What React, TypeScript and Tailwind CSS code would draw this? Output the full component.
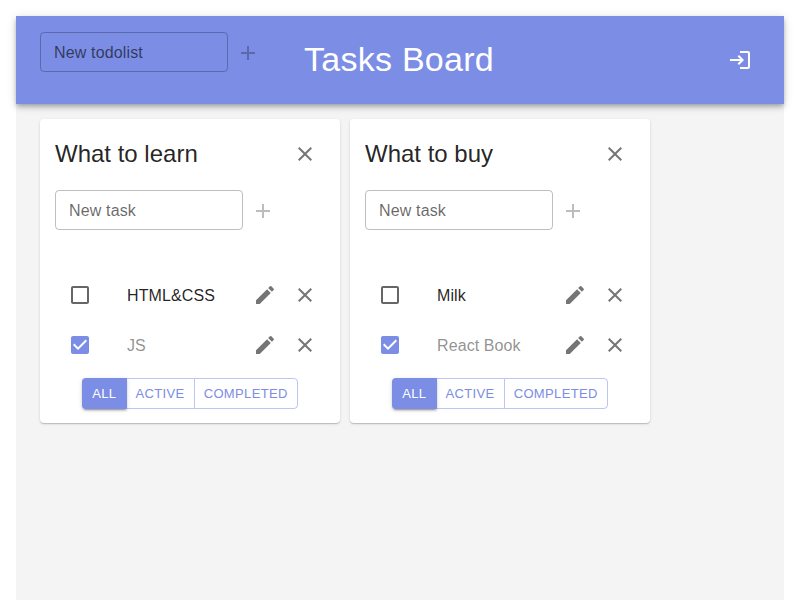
import React from 'react';

function Icon({ d, className = '' }: { d: string; className?: string }) {
  return (
    <svg viewBox="0 0 24 24" className={`block size-6 shrink-0 fill-current ${className}`} aria-hidden="true">
      <path d={d} />
    </svg>
  );
}

const ADD = 'M19 13h-6v6h-2v-6H5v-2h6V5h2v6h6v2z';
const CLOSE =
  'M19 6.41 17.59 5 12 10.59 6.41 5 5 6.41 10.59 12 5 17.59 6.41 19 12 13.41 17.59 19 19 17.59 13.41 12z';
const EDIT =
  'M3 17.25V21h3.75L17.81 9.94l-3.75-3.75L3 17.25zM20.71 7.04c.39-.39.39-1.02 0-1.41l-2.34-2.34a.9959.9959 0 0 0-1.41 0l-1.83 1.83 3.75 3.75 1.83-1.83z';
const LOGIN =
  'M11 7 9.6 8.4l2.6 2.6H2v2h10.2l-2.6 2.6L11 17l5-5-5-5zm9 12h-8v2h8c1.1 0 2-.9 2-2V5c0-1.1-.9-2-2-2h-8v2h8v14z';
const BOX_EMPTY =
  'M19 5v14H5V5h14m0-2H5c-1.1 0-2 .9-2 2v14c0 1.1.9 2 2 2h14c1.1 0 2-.9 2-2V5c0-1.1-.9-2-2-2z';
const BOX_CHECKED =
  'M19 3H5c-1.11 0-2 .9-2 2v14c0 1.1.89 2 2 2h14c1.11 0 2-.9 2-2V5c0-1.1-.89-2-2-2zm-9 14l-5-5 1.41-1.41L10 14.17l7.59-7.59L19 8l-9 9z';

function AddItem({ label }: { label: string }) {
  return (
    <div className="flex items-center">
      <div className="flex h-10 w-[188px] items-center rounded border border-black/25 px-[13px] pt-[2px] tracking-[0.15px] text-black/60">
        <span className="whitespace-nowrap">{label}</span>
      </div>
      <button className="px-2 pt-[8.5px] pb-[7.5px] text-black/26">
        <Icon d={ADD} />
      </button>
    </div>
  );
}

type Task = { title: string; done: boolean };

function TodoList({ title, tasks }: { title: string; tasks: Task[] }) {
  return (
    <section className="h-[303.5px] w-[300px] rounded bg-white p-[15px] shadow-[0_1px_1px_-1px_rgba(0,0,0,0.2),0_1px_1px_0_rgba(0,0,0,0.14),0_1px_3px_0_rgba(0,0,0,0.12)]">
      <div className="flex h-10 items-center justify-between">
        <h2 className="text-2xl whitespace-nowrap">{title}</h2>
        <button className="p-2 text-black/54">
          <Icon d={CLOSE} />
        </button>
      </div>
      <div className="mt-4">
        <AddItem label="New task" />
      </div>
      <ul className="mt-10">
        {tasks.map((task) => (
          <li key={task.title} className="flex h-[50px] items-center pl-[13px]">
            <span className={task.done ? 'text-[#7b8de4]' : 'text-black/60'}>
              <Icon d={task.done ? BOX_CHECKED : BOX_EMPTY} />
            </span>
            <span
              className={`ml-[35px] flex-1 pt-[2px] tracking-[0.1px] whitespace-nowrap ${task.done ? 'opacity-50' : ''}`}
            >
              {task.title}
            </span>
            <button className="p-2 text-black/54">
              <Icon d={EDIT} />
            </button>
            <button className="p-2 text-black/54">
              <Icon d={CLOSE} />
            </button>
          </li>
        ))}
      </ul>
      <div className="mt-2 ml-[27px] flex h-[30.5px] w-[216px] text-[13px] tracking-[0.37px] text-[#7b8de4]">
        <button className="w-[44.5px] rounded-l bg-[#7b8de4] text-white shadow-[0_3px_1px_-2px_rgba(0,0,0,0.2),0_2px_2px_0_rgba(0,0,0,0.14),0_1px_5px_0_rgba(0,0,0,0.12)]">
          ALL
        </button>
        <button className="w-[67px] border-y border-[#7b8de4]/50">ACTIVE</button>
        <button className="w-[104.5px] rounded-r border border-[#7b8de4]/50">COMPLETED</button>
      </div>
    </section>
  );
}

const LISTS = [
  {
    title: 'What to learn',
    tasks: [
      { title: 'HTML&CSS', done: false },
      { title: 'JS', done: true },
    ],
  },
  {
    title: 'What to buy',
    tasks: [
      { title: 'Milk', done: false },
      { title: 'React Book', done: true },
    ],
  },
];

export default function App() {
  return (
    <div className="h-[600px] w-[800px] overflow-hidden bg-white px-4 pt-4 font-['Liberation_Sans',Arial,sans-serif] text-base text-black/87">
      <div className="h-full bg-[#f4f4f4]">
        <header className="relative grid h-[88px] grid-cols-[1fr_auto_1fr] items-center bg-[#7b8de4] px-6 text-white shadow-[0_2px_4px_-1px_rgba(0,0,0,0.2),0_4px_5px_0_rgba(0,0,0,0.14),0_1px_10px_0_rgba(0,0,0,0.12)]">
          <div className="self-start pt-4">
            <AddItem label="New todolist" />
          </div>
          <h1 className="pr-0.5 pb-0.5 text-[34px] leading-[42px] tracking-[0.25px] whitespace-nowrap">Tasks Board</h1>
          <button className="justify-self-end p-2">
            <Icon d={LOGIN} />
          </button>
        </header>
        <main className="flex gap-[10px] px-6 pt-[15px]">
          {LISTS.map((list) => (
            <TodoList key={list.title} {...list} />
          ))}
        </main>
      </div>
    </div>
  );
}
